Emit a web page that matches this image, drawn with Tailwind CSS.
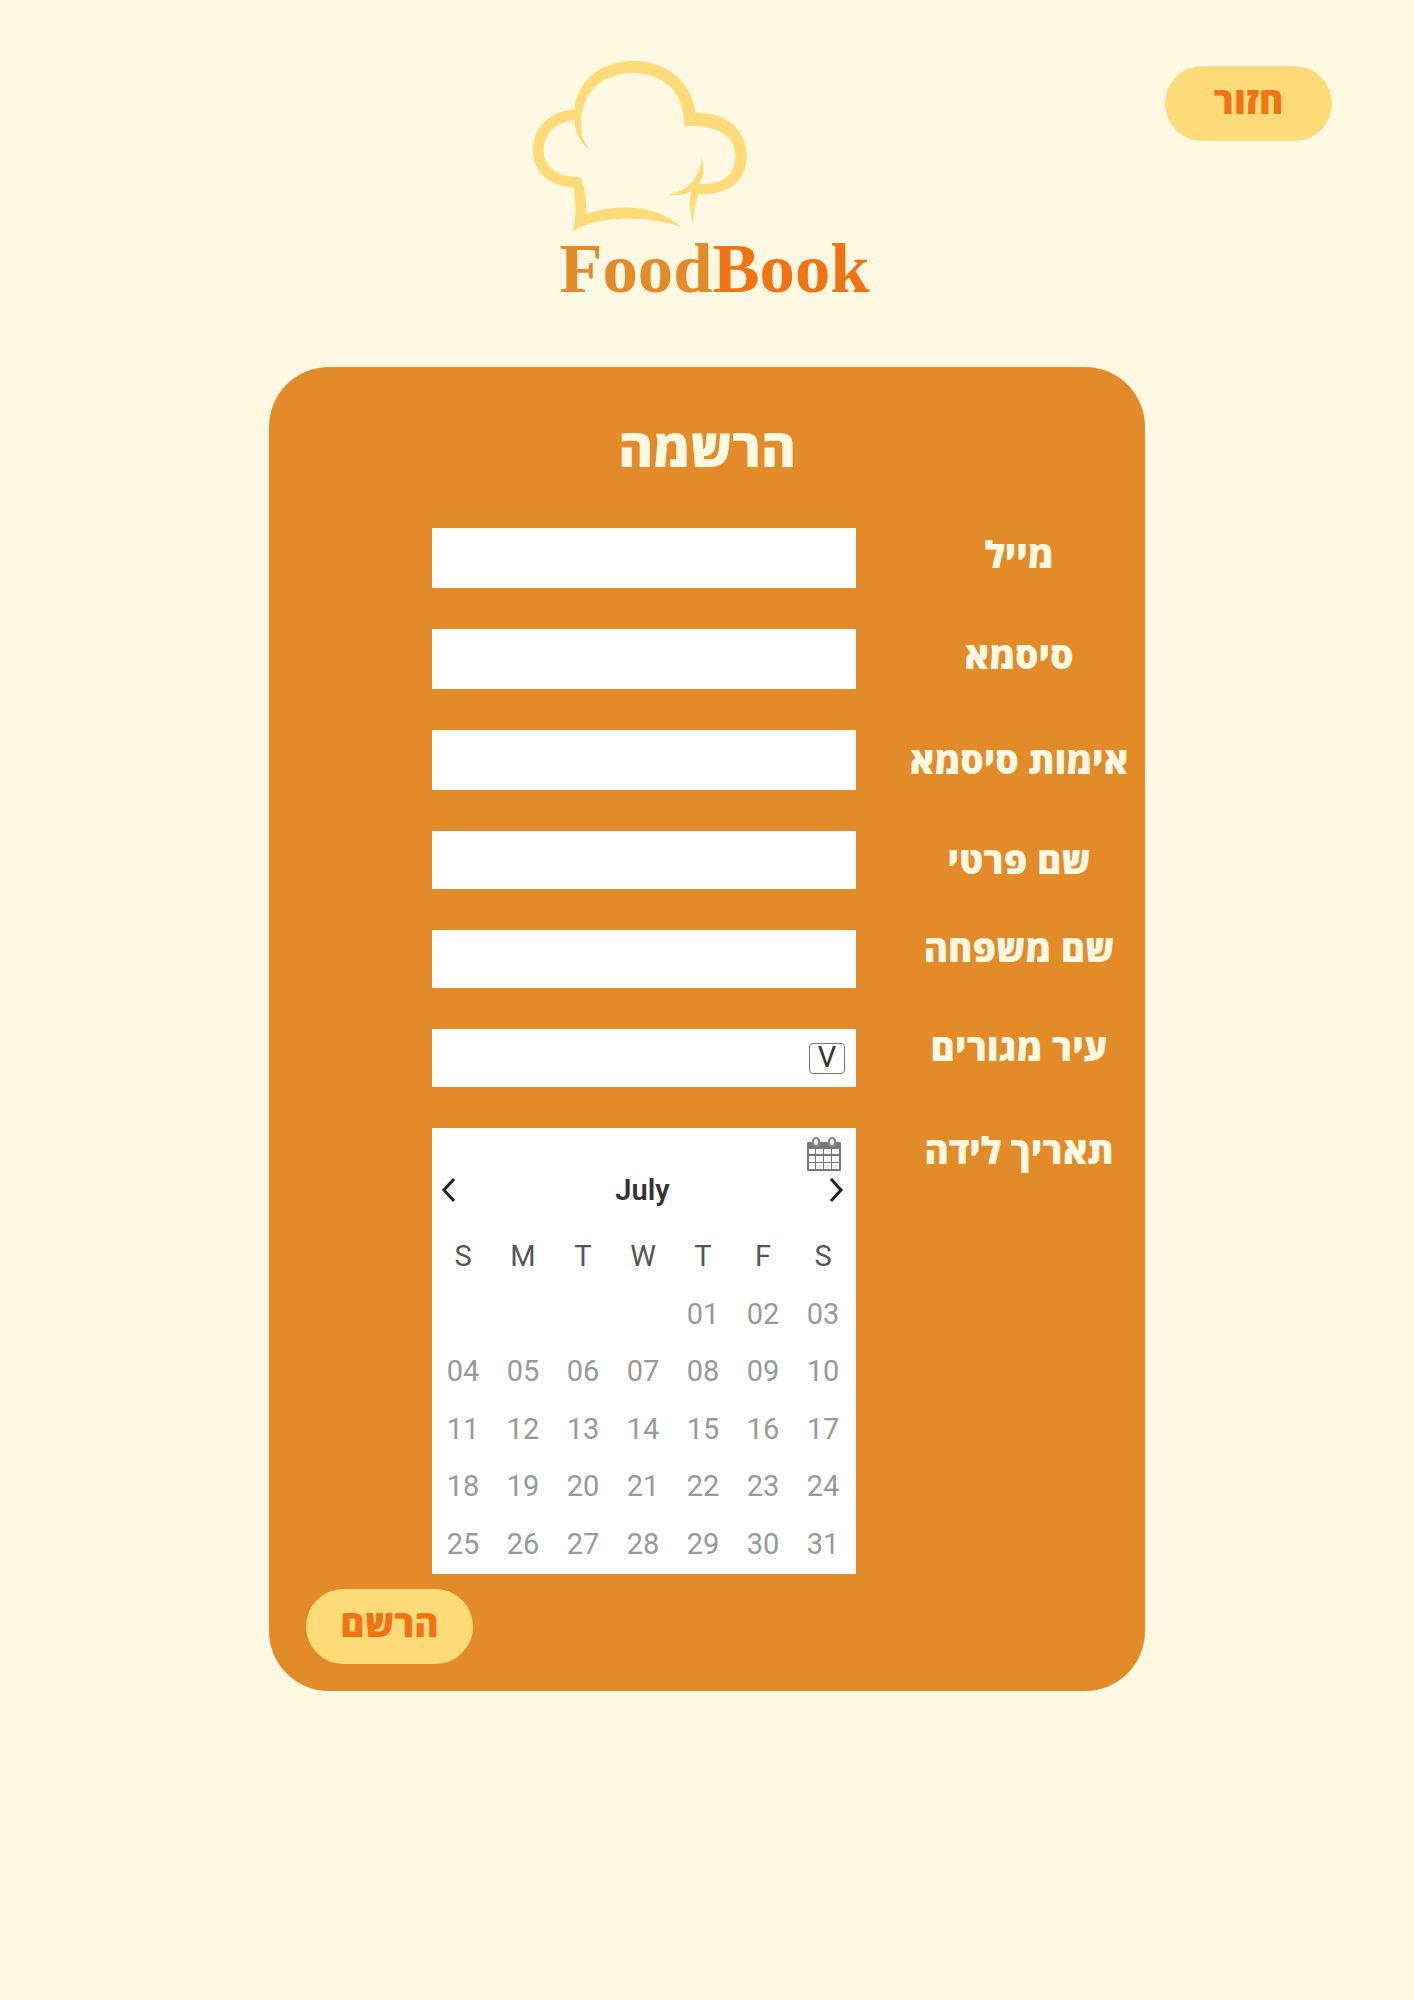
<!DOCTYPE html>
<html lang="he" dir="rtl">
<head>
<meta charset="utf-8">
<meta name="viewport" content="width=device-width, initial-scale=1">
<title>FoodBook - הרשמה</title>
<script src="https://cdn.jsdelivr.net/npm/@tailwindcss/browser@4"></script>
</head>
<body class="min-h-screen bg-[#fff8e2] font-['Open_Sans','Liberation_Sans',sans-serif]">
<header class="grid grid-cols-[1fr_auto_1fr] items-start pt-[61px]">
  <div class="pt-[5px] pr-[82px]">
    <button type="button" class="h-[75px] w-[167px] rounded-[38px] bg-[#ffda78] pb-2 text-[37px] leading-none font-extrabold text-[#f07314]">חזור</button>
  </div>
  <svg class="h-[250px] w-[348px]" viewBox="69 63 1044 750" role="img" aria-label="FoodBook" direction="ltr">
    <path fill="#ffda78" d="M240 331C205 305 192 265 194 240C140 245 101 280 101 330C101 380 140 412 212 412C226 450 230 480 229 520C330 490 440 495 513 560C420 530 280 520 189 573C200 520 197 480 190 443C115 437 69 395 69 330C69 265 120 212 194 208C200 125 270 63 369 63C470 63 545 125 557 219C650 217 710 270 710 345C710 420 660 468 566 461C556 490 550 520 548 550C540 520 538 490 543 453C520 465 500 468 475 464C530 455 575 410 574 354C585 385 580 410 567 432C640 435 676 405 676 345C676 290 620 250 523 259C523 160 465 99 369 99C270 99 213 165 213 250C213 285 222 310 240 331Z"/>
    <text x="148" y="756" font-size="212" font-weight="700" fill="#e28b28" class="font-['Liberation_Serif',serif]">Food<tspan fill="#f07314">Book</tspan></text>
  </svg>
</header>

<main class="mx-auto mt-14 w-full max-w-[876px] rounded-[60px] bg-[#e28b28] pb-[27px]">
  <form>
    <h1 class="pt-11 pb-[45px] text-center text-[53px] leading-[72px] font-extrabold text-[#fff8e2]">הרשמה</h1>
    <div class="flex flex-col gap-[41px] pl-[163px] text-[37px] font-extrabold text-[#fff8e2]">
      <div class="grid grid-cols-[252px_minmax(0,1fr)] items-start gap-[37px]">
        <label for="mail" class="text-center leading-[52px]">מייל</label>
        <input id="mail" type="email" class="h-[60px] w-full bg-white px-4 text-2xl text-black">
      </div>
      <div class="grid grid-cols-[252px_minmax(0,1fr)] items-start gap-[37px]">
        <label for="pass" class="text-center leading-[52px]">סיסמא</label>
        <input id="pass" type="password" class="h-[60px] w-full bg-white px-4 text-2xl text-black">
      </div>
      <div class="grid grid-cols-[252px_minmax(0,1fr)] items-center gap-[37px]">
        <label for="pass2" class="text-center leading-[60px]">אימות סיסמא</label>
        <input id="pass2" type="password" class="h-[60px] w-full bg-white px-4 text-2xl text-black">
      </div>
      <div class="grid grid-cols-[252px_minmax(0,1fr)] items-center gap-[37px]">
        <label for="first" class="text-center leading-[52px]">שם פרטי</label>
        <input id="first" type="text" class="h-[58px] w-full bg-white px-4 text-2xl text-black">
      </div>
      <div class="grid grid-cols-[252px_minmax(0,1fr)] items-start gap-[37px]">
        <label for="last" class="text-center leading-9">שם משפחה</label>
        <input id="last" type="text" class="h-[58px] w-full bg-white px-4 text-2xl text-black">
      </div>
      <div class="grid grid-cols-[252px_minmax(0,1fr)] items-start gap-[37px]">
        <label for="city" class="text-center leading-9">עיר מגורים</label>
        <div class="relative">
          <select id="city" class="block h-[58px] w-full appearance-none bg-white px-14 text-2xl text-black"><option></option></select>
          <span aria-hidden="true" class="pointer-events-none absolute top-[14px] right-[11px] flex h-[31px] w-9 justify-center rounded border border-[#777] font-['Roboto',sans-serif] text-[29px] leading-[27px] font-normal text-[#333]">V</span>
        </div>
      </div>
      <div class="grid grid-cols-[252px_minmax(0,1fr)] items-start gap-[37px]">
        <div id="birth" class="text-center leading-11">תאריך לידה</div>
        <div dir="ltr" role="group" aria-labelledby="birth" class="bg-white pt-2 pb-[2px] font-['Roboto',sans-serif] text-[29px] leading-9 font-normal">
          <div class="flex justify-end pr-[14px]">
            <button type="button" aria-label="לוח שנה" class="block">
              <svg class="h-9 w-9" viewBox="0 0 36 36">
                <rect x="1" y="6" width="34" height="29" rx="1" fill="#777"/>
                <path fill="#fff" d="M3 13h6v5H3zm7 0h7v5h-7zm8 0h7v5h-7zm8 0h7v5h-7zM3 20h6v6H3zm7 0h7v6h-7zm8 0h7v6h-7zm8 0h7v6h-7zM3 27h6v6H3zm7 0h7v6h-7zm8 0h7v6h-7zm8 0h7v6h-7z"/>
                <rect x="7" y="2" width="6" height="8" rx="3" fill="#eee" stroke="#888" stroke-width="2"/>
                <rect x="23" y="2" width="6" height="8" rx="3" fill="#eee" stroke="#888" stroke-width="2"/>
              </svg>
            </button>
          </div>
          <div class="flex items-center justify-between pr-[11px] pl-2">
            <button type="button" aria-label="החודש הקודם"><svg class="h-7 w-4" viewBox="0 0 16 28" fill="none" stroke="#222" stroke-width="3"><path d="M14 3L4 14L14 25"/></svg></button>
            <span class="font-semibold text-[#333]">July</span>
            <button type="button" aria-label="החודש הבא"><svg class="h-7 w-4" viewBox="0 0 16 28" fill="none" stroke="#222" stroke-width="3"><path d="M2 3L12 14L2 25"/></svg></button>
          </div>
          <div class="pt-[18px] pr-[3px] pl-px">
            <table class="w-full table-fixed text-center text-[#999]">
              <thead class="text-[#555]"><tr class="h-[59px]"><th class="font-normal">S</th><th class="font-normal">M</th><th class="font-normal">T</th><th class="font-normal">W</th><th class="font-normal">T</th><th class="font-normal">F</th><th class="font-normal">S</th></tr></thead>
              <tbody>
                <tr class="h-[57px]"><td></td><td></td><td></td><td></td><td>01</td><td>02</td><td>03</td></tr>
                <tr class="h-[58px]"><td>04</td><td>05</td><td>06</td><td>07</td><td>08</td><td>09</td><td>10</td></tr>
                <tr class="h-[57px]"><td>11</td><td>12</td><td>13</td><td>14</td><td>15</td><td>16</td><td>17</td></tr>
                <tr class="h-[58px]"><td>18</td><td>19</td><td>20</td><td>21</td><td>22</td><td>23</td><td>24</td></tr>
                <tr class="h-[57px]"><td>25</td><td>26</td><td>27</td><td>28</td><td>29</td><td>30</td><td>31</td></tr>
              </tbody>
            </table>
          </div>
        </div>
      </div>
    </div>
    <div class="flex justify-end pt-[15px] pl-[37px]">
      <button type="submit" class="h-[75px] w-[167px] rounded-[38px] bg-[#ffda78] pb-2 text-[37px] leading-none font-extrabold text-[#f07314]">הרשם</button>
    </div>
  </form>
</main>
</body>
</html>
